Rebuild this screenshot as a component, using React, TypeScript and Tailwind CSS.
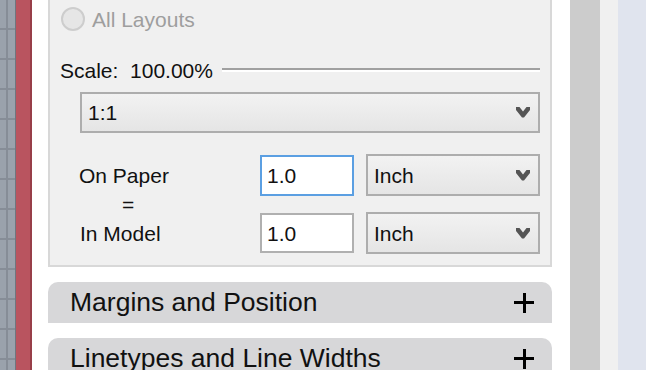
import React from 'react';

const font = { fontFamily: '"Liberation Sans", Arial, sans-serif' };

function Chevron() {
  return (
    <svg width="14" height="11" viewBox="0 0 14 11" className="shrink-0">
      <polygon points="0,0 3.5,0 7,4.5 10.5,0 14,0 14,3 8,10.5 6,10.5 0,3" fill="#555555" />
    </svg>
  );
}

function Select({ value, className }: { value: string; className: string }) {
  return (
    <div
      className={`flex items-center justify-between border-2 border-[#adadad] bg-linear-to-b from-[#f2f2f2] to-[#e5e5e5] pl-[6px] pr-[8px] ${className}`}
    >
      <span className="text-[21px] leading-none text-[#111]">{value}</span>
      <Chevron />
    </div>
  );
}

function Plus() {
  return (
    <div className="relative h-[20px] w-[20px]">
      <div className="absolute left-0 top-[8px] h-[3px] w-[20px] bg-black" />
      <div className="absolute left-[8.5px] top-0 h-[20px] w-[3px] bg-black" />
    </div>
  );
}

function SectionHeader({ title }: { title: string }) {
  return (
    <div className="flex h-[41px] shrink-0 items-center justify-between rounded-t-[10px] bg-[#d7d7d9] pl-[22px] pr-[18px]">
      <span className="text-[26.5px] leading-none text-[#111]">{title}</span>
      <Plus />
    </div>
  );
}

export default function App() {
  return (
    <div className="flex h-[370px] w-[646px] overflow-hidden bg-white" style={font}>
      {/* drawing grid on the left */}
      <div className="w-[15px] shrink-0 bg-[#9aa2ac] bg-[linear-gradient(to_right,transparent_6px,#868d97_6px,#868d97_8px,transparent_8px),linear-gradient(to_bottom,transparent_28px,#868d97_28px,#868d97_30px,transparent_30px)] bg-[length:100%_30px]" />
      <div className="w-[1px] shrink-0 bg-[#6f757e]" />
      <div className="w-[14px] shrink-0 bg-[#b9545f]" />
      <div className="w-[2px] shrink-0 bg-[#983f49]" />
      <div className="w-[16px] shrink-0 bg-white" />

      {/* main column */}
      <div className="flex w-[504px] shrink-0 flex-col">
        <div className="flex flex-col border-2 border-t-0 border-[#d8d8d8] bg-[#f0f0f0] pb-[11px]">
          <div className="flex h-[38px] items-center pl-[11px]">
            <div className="h-[24px] w-[24px] rounded-full border-2 border-[#cdcdcd] bg-[#e6e6e6]" />
            <span className="ml-[7px] text-[21px] leading-none text-[#9e9e9e]">All Layouts</span>
          </div>

          <div className="mt-[12px] flex h-[40px] items-center pl-[10px] pr-[10px]">
            <span className="whitespace-pre text-[21px] leading-none text-[#111]">Scale:  100.00%</span>
            <div className="ml-[9px] h-[4px] flex-1 border-t-2 border-b-2 border-t-[#a0a0a0] border-b-white" />
          </div>

          <Select value="1:1" className="ml-[30px] mr-[10px] mt-[2px] h-[41px]" />

          <div className="mt-[21px] flex h-[42px] items-center pl-[29px]">
            <span className="w-[181px] text-[21px] leading-none text-[#111]">On Paper</span>
            <div className="flex h-[41px] w-[94px] items-center border-2 border-[#5b9fe2] bg-white pl-[5px]">
              <span className="text-[21px] leading-none text-[#111]">1.0</span>
            </div>
            <Select value="Inch" className="ml-[12px] h-[42px] w-[174px]" />
          </div>

          <div className="flex h-[16px] items-center pl-[72px]">
            <span className="text-[21px] leading-none text-[#111]">=</span>
          </div>

          <div className="flex h-[42px] items-center pl-[30px]">
            <span className="w-[180px] text-[21px] leading-none text-[#111]">In Model</span>
            <div className="flex h-[40px] w-[94px] items-center border-2 border-[#b0b0b0] bg-white pl-[5px]">
              <span className="text-[21px] leading-none text-[#111]">1.0</span>
            </div>
            <Select value="Inch" className="ml-[12px] h-[42px] w-[174px]" />
          </div>
        </div>

        <div className="mt-[15px] flex flex-col gap-[15px]">
          <SectionHeader title="Margins and Position" />
          <SectionHeader title="Linetypes and Line Widths" />
        </div>
      </div>

      {/* right side strips */}
      <div className="w-[18px] shrink-0 bg-white" />
      <div className="w-[30px] shrink-0 bg-[#cccccc]" />
      <div className="w-[18px] shrink-0 bg-[#f0f0f0]" />
      <div className="w-[28px] shrink-0 bg-[#e0e4ee]" />
    </div>
  );
}
